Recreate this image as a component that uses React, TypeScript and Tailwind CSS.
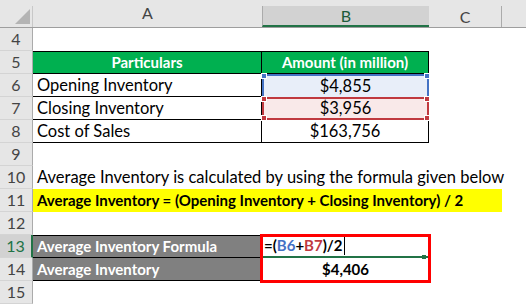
import React from "react"

const font = { fontFamily: "Lato, 'Liberation Sans', sans-serif" }

function RowNum({ n, active }: { n: number; active?: boolean }) {
  return (
    <div
      className={
        "h-[23px] flex items-center justify-center border-b border-[#d4d4d4] text-[16px] " +
        (active
          ? "bg-[#d2d2d2] text-[#217346] border-r-2 border-r-[#217346]"
          : "bg-[#e6e6e6] text-[#444] border-r border-r-[#ababab]")
      }
    >
      {n}
    </div>
  )
}

function Handle({ pos, color }: { pos: string; color: string }) {
  return <span className={"absolute w-[6px] h-[6px] z-10 border border-white " + pos + " " + color} />
}

export default function App() {
  return (
    <div className="w-[526px] h-[305px] bg-white overflow-hidden text-[16.5px] text-black" style={font}>
      <div className="relative grid grid-cols-[33px_229px_167px_73px_1fr]">
        {/* column headers */}
        <div className="h-[28px] bg-[#e6e6e6] border-b border-[#9e9e9e] relative">
          <svg className="absolute left-[15px] top-[9px]" width="15" height="15" viewBox="0 0 15 15">
            <polygon points="15,0 15,15 0,15" fill="#b4b4b4" />
          </svg>
          <span className="absolute right-0 top-[6px] bottom-0 w-px bg-[#c8c8c8]" />
        </div>
        <div className="h-[28px] bg-[#e6e6e6] border-b border-[#9e9e9e] flex items-end justify-center pb-[2px] text-[16px] text-[#444]">
          A
        </div>
        <div className="h-[28px] bg-[#e6e6e6] border-b border-[#9e9e9e] pt-[6px]">
          <div className="h-full bg-[#d2d2d2] border-l border-[#ababab] border-b-2 border-b-[#217346] flex items-center justify-center text-[16px] text-[#1e5b3a]">
            B
          </div>
        </div>
        <div className="h-[28px] bg-[#e6e6e6] border-b border-[#9e9e9e] pt-[6px]">
          <div className="h-full border-r border-[#ababab] flex items-center justify-center text-[16px] text-[#444]">C</div>
        </div>
        <div className="h-[28px] bg-[#e6e6e6] border-b border-[#9e9e9e]" />

        {/* row 4 */}
        <RowNum n={4} />
        <div className="col-span-4 h-[23px]" />

        {/* row 5 */}
        <RowNum n={5} />
        <div className="h-[23px] bg-[#00b050] border-y border-r border-black flex items-center justify-center font-bold text-[15px] text-white">
          Particulars
        </div>
        <div className="h-[23px] bg-[#00b050] border-y border-r border-black flex items-center justify-center font-bold text-[15px] text-white">
          Amount (in million)
        </div>
        <div className="col-span-2" />

        {/* row 6 */}
        <RowNum n={6} />
        <div className="h-[23px] border-b border-r border-black flex items-center pl-[4px]">Opening Inventory</div>
        <div className="relative h-[23px] bg-[#e8eef9] border-2 border-[#4472c4] border-b-0 flex items-center justify-center">
          $4,855
          <Handle pos="-left-[3px] -top-[3px]" color="bg-[#4472c4]" />
          <Handle pos="-right-[3px] -top-[3px]" color="bg-[#4472c4]" />
        </div>
        <div className="col-span-2" />

        {/* row 7 */}
        <RowNum n={7} />
        <div className="h-[23px] border-b border-r border-black flex items-center pl-[4px]">Closing Inventory</div>
        <div className="relative h-[23px] bg-[#f9e9e9] border-2 border-[#c0393f] flex items-center justify-center">
          $3,956
          <Handle pos="-left-[3px] -top-[3px]" color="bg-[#c0393f]" />
          <Handle pos="-right-[3px] -top-[3px]" color="bg-[#c0393f]" />
          <Handle pos="-left-[3px] -bottom-[3px]" color="bg-[#c0393f]" />
          <Handle pos="-right-[3px] -bottom-[3px]" color="bg-[#c0393f]" />
        </div>
        <div className="col-span-2" />

        {/* row 8 */}
        <RowNum n={8} />
        <div className="h-[23px] border-b border-r border-black flex items-center pl-[4px]">Cost of Sales</div>
        <div className="h-[23px] border-b border-r border-black flex items-center justify-center">$163,756</div>
        <div className="col-span-2" />

        {/* row 9 */}
        <RowNum n={9} />
        <div className="col-span-4" />

        {/* row 10 */}
        <RowNum n={10} />
        <div className="col-span-4 h-[23px] flex items-center pl-[4px] whitespace-nowrap">
          Average Inventory is calculated by using the formula given below
        </div>

        {/* row 11 */}
        <RowNum n={11} />
        <div className="col-span-3 h-[23px] bg-[#ffff00] flex items-center pl-[4px] whitespace-nowrap font-bold text-[15px]">
          Average Inventory = (Opening Inventory + Closing Inventory) / 2
        </div>
        <div />

        {/* row 12 */}
        <RowNum n={12} />
        <div className="col-span-4" />

        {/* row 13 */}
        <RowNum n={13} active />
        <div className="h-[23px] bg-[#808080] border-y border-r border-black flex items-center pl-[4px] font-bold text-[15px] text-white">
          Average Inventory Formula
        </div>
        <div className="relative h-[23px] border-b-2 border-[#217346] flex items-center pl-[2px] font-bold text-[15px]">
          <span>=(</span>
          <span className="text-[#4472c4]">B6</span>
          <span>+</span>
          <span className="text-[#c0393f]">B7</span>
          <span>)/2</span>
          <span className="ml-[1px] w-px h-[18px] bg-black" />
          <span className="absolute right-[3px] -bottom-[3px] w-[4px] h-[4px] bg-[#217346]" />
        </div>
        <div className="col-span-2" />

        {/* row 14 */}
        <RowNum n={14} />
        <div className="h-[23px] bg-[#808080] border-b border-r border-black flex items-center pl-[4px] font-bold text-[15px] text-white">
          Average Inventory
        </div>
        <div className="h-[23px] flex items-center justify-center font-bold text-[15px]">$4,406</div>
        <div className="col-span-2" />

        {/* row 15 */}
        <RowNum n={15} />
        <div className="col-span-4" />

        {/* red outline round B13:B14 */}
        <div className="absolute left-[260px] top-[234px] w-[171px] h-[49px] border-[3px] border-[#ff0000] pointer-events-none" />
      </div>
    </div>
  )
}
